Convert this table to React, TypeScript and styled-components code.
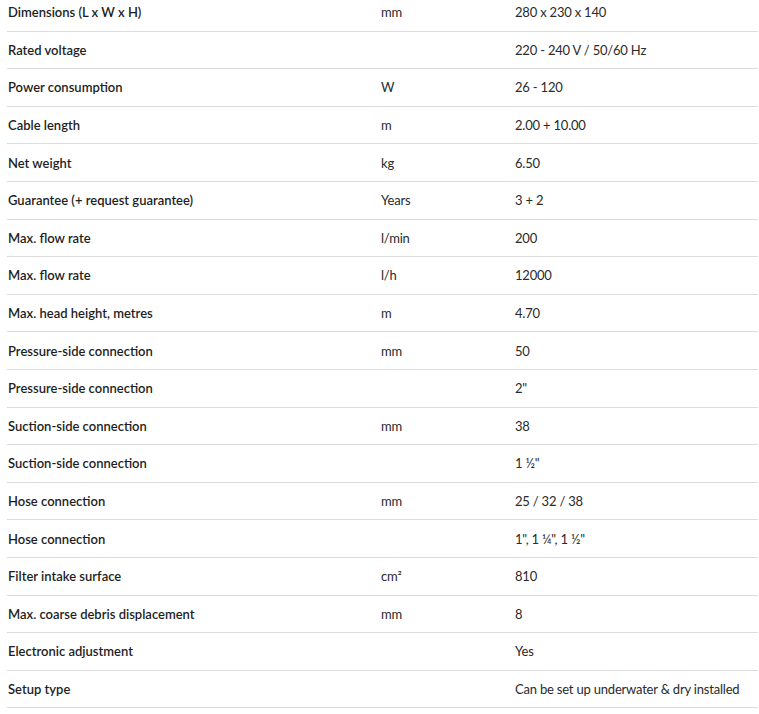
import React from "react";
import styled, { createGlobalStyle } from "styled-components";

const GlobalStyle = createGlobalStyle`
  html, body { margin: 0; padding: 0; background: #ffffff; }
  body { font-family: Lato, "Liberation Sans", sans-serif; color: #222222; overflow: hidden; }
`;

const Table = styled.div`
  margin: -6px 1px 0 7px;
  display: flex;
  flex-direction: column;
`;

const Row = styled.div`
  display: grid;
  grid-template-columns: 374px 134px 1fr;
  height: 37.6px;
  align-items: center;
  border-bottom: 1px solid #dcdcdc;
  box-sizing: border-box;
  font-size: 13px;
  line-height: 16px;
`;

const Label = styled.div`
  padding-left: 1px;
  font-weight: 600;
  color: #1e1e1e;
`;

const Cell = styled.div`
  color: #2a2a2a;
  letter-spacing: -0.2px;
`;

const rows: [string, string, string][] = [
  ["Dimensions (L x W x H)", "mm", "280 x 230 x 140"],
  ["Rated voltage", "", "220 - 240 V / 50/60 Hz"],
  ["Power consumption", "W", "26 - 120"],
  ["Cable length", "m", "2.00 + 10.00"],
  ["Net weight", "kg", "6.50"],
  ["Guarantee (+ request guarantee)", "Years", "3 + 2"],
  ["Max. flow rate", "l/min", "200"],
  ["Max. flow rate", "l/h", "12000"],
  ["Max. head height, metres", "m", "4.70"],
  ["Pressure-side connection", "mm", "50"],
  ["Pressure-side connection", "", "2\""],
  ["Suction-side connection", "mm", "38"],
  ["Suction-side connection", "", "1 ½\""],
  ["Hose connection", "mm", "25 / 32 / 38"],
  ["Hose connection", "", "1\", 1 ¼\", 1 ½\""],
  ["Filter intake surface", "cm²", "810"],
  ["Max. coarse debris displacement", "mm", "8"],
  ["Electronic adjustment", "", "Yes"],
  ["Setup type", "", "Can be set up underwater & dry installed"],
];

export default function App() {
  return (
    <>
      <GlobalStyle />
      <Table>
        {rows.map(([l, u, v], i) => (
          <Row key={i}>
            <Label>{l}</Label>
            <Cell>{u}</Cell>
            <Cell>{v}</Cell>
          </Row>
        ))}
      </Table>
    </>
  );
}
